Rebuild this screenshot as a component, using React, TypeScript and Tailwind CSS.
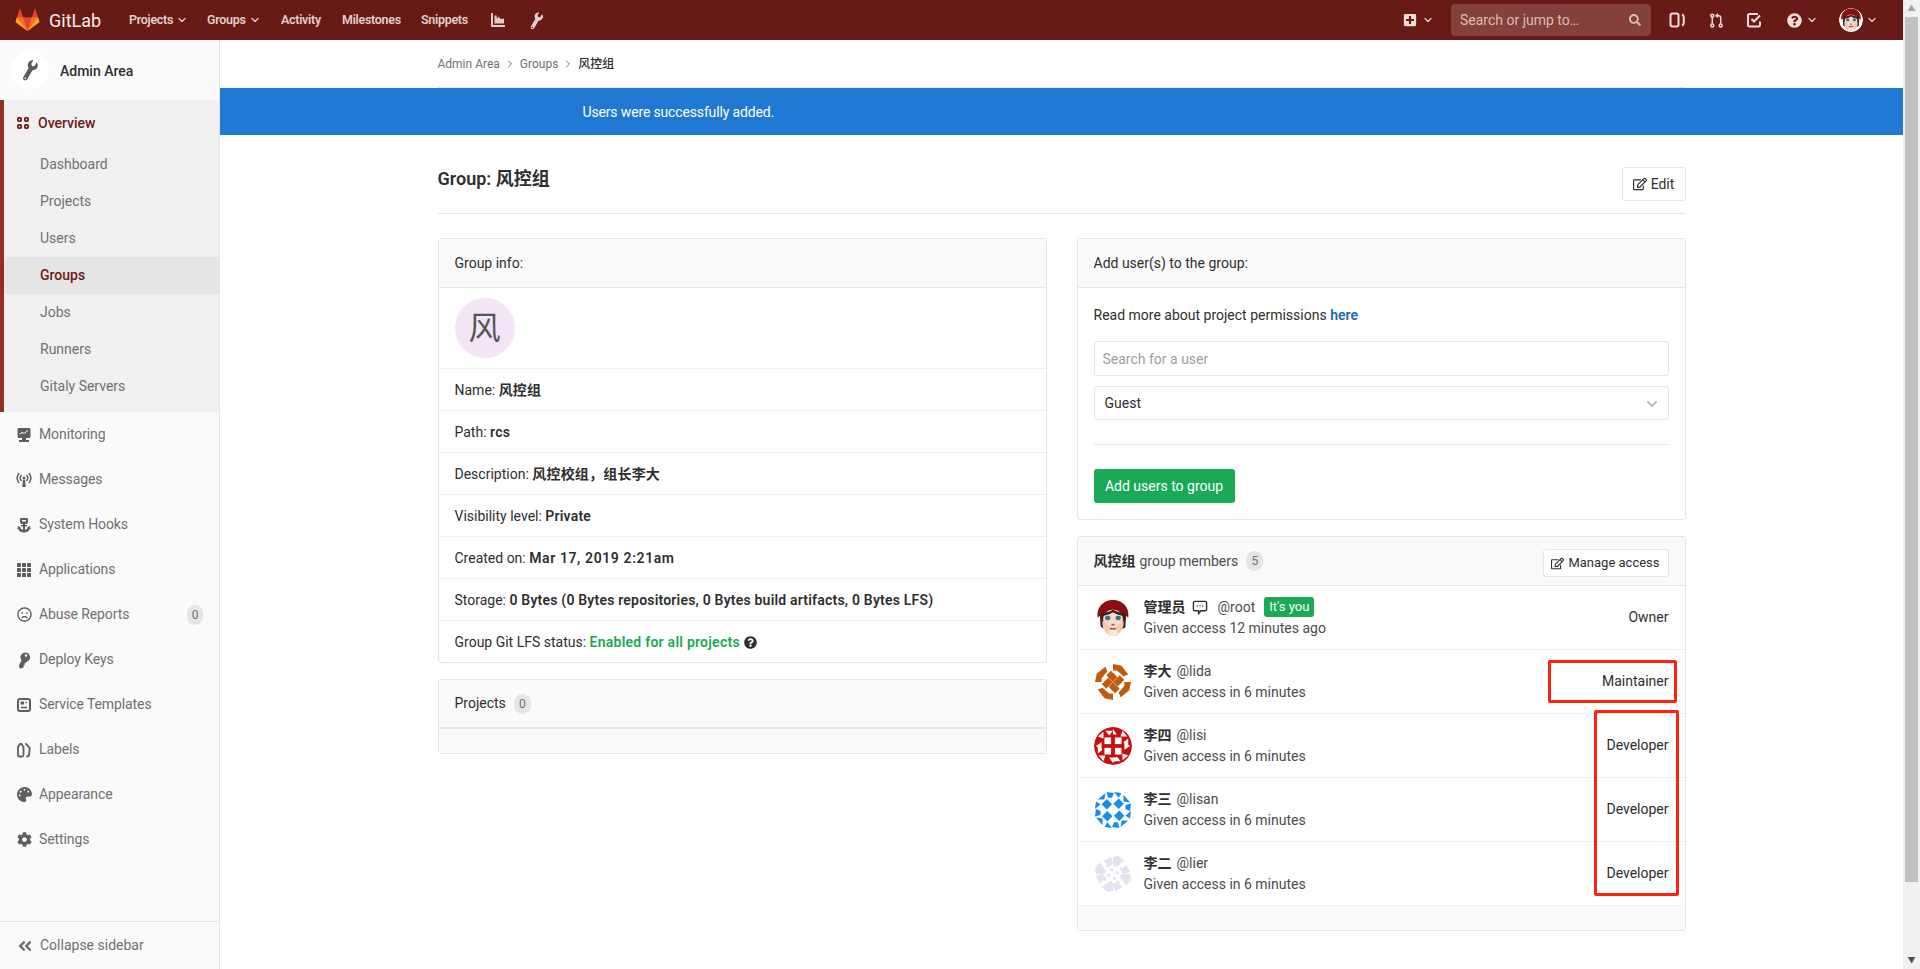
import type { ReactNode } from "react";
import { ChevronDown, ChevronRight } from "lucide-react";
import {
  FaAngleDoubleLeft,
  FaCog,
  FaKey,
  FaPalette,
  FaPlusSquare,
  FaQuestionCircle,
  FaRegEdit,
  FaRegFrown,
  FaSearch,
  FaWrench,
} from "react-icons/fa";

function Tanuki() {
  return (
    <svg viewBox="0 0 36 36" className="h-[24px] w-[25px] shrink-0">
      <path fill="#e24329" d="M2 14l9.38 9v-9l-4-12.28c-.205-.632-1.176-.632-1.38 0z" />
      <path fill="#e24329" d="M34 14l-9.38 9v-9l4-12.28c.205-.632 1.176-.632 1.38 0z" />
      <path fill="#e24329" d="M18,34.38 3,14 33,14 Z" />
      <path fill="#fc6d26" d="M18,34.38 11.38,14 2,14 6,25Z" />
      <path fill="#fc6d26" d="M18,34.38 24.62,14 34,14 30,25Z" />
      <path fill="#fca326" d="M2 14L.1 20.16c-.18.565 0 1.2.5 1.56l17.42 12.66z" />
      <path fill="#fca326" d="M34 14l1.9 6.16c.18.565 0 1.2-.5 1.56L18 34.38z" />
    </svg>
  );
}

function ChartIcon() {
  return (
    <svg viewBox="0 0 16 16" className="h-[16px] w-[16px]" fill="currentColor">
      <path d="M1 1h2v12h12v2H2a1 1 0 0 1-1-1z" />
      <path d="M4.5 11.5V3.5h2.2v3l2-1.8 2 2.3 3.3-.6v5.1z" />
    </svg>
  );
}

function BoardIcon() {
  return (
    <svg viewBox="0 0 16 16" className="h-[16px] w-[16px]" fill="none" stroke="currentColor" strokeWidth="2">
      <rect x="1.5" y="1.5" width="8" height="13" rx="2" />
      <path d="M13 2.5c1.2.6 1.8 1.6 1.8 3v5c0 1.4-.6 2.4-1.8 3" />
    </svg>
  );
}

function MergeIcon() {
  return (
    <svg viewBox="0 0 16 16" className="h-[17px] w-[15px]" fill="none" stroke="currentColor" strokeWidth="1.6">
      <circle cx="3.5" cy="2.8" r="1.6" />
      <circle cx="3.5" cy="13.2" r="1.6" />
      <circle cx="12.5" cy="13.2" r="1.6" />
      <path d="M3.5 4.5v7M12.5 11.5V5c0-1.5-.8-2.2-2.2-2.2H8" />
      <path d="M9.6 .9 7.6 2.8l2 1.9" />
    </svg>
  );
}

function TodoIcon() {
  return (
    <svg viewBox="0 0 16 16" className="h-[16px] w-[16px]" fill="none" stroke="currentColor" strokeWidth="2">
      <path d="M14 9.5V13a1.5 1.5 0 0 1-1.5 1.5h-9A1.5 1.5 0 0 1 2 13V3.5A1.5 1.5 0 0 1 3.5 2H12" />
      <path d="M5.5 7 8 9.5 14 3.5" />
    </svg>
  );
}

function OverviewIcon() {
  return (
    <svg viewBox="0 0 12 12" className="h-[12px] w-[12px]" fill="none" stroke="#6b1a16" strokeWidth="1.8">
      <rect x=".9" y=".9" width="3.2" height="3.2" rx=".8" />
      <rect x="7.9" y=".9" width="3.2" height="3.2" rx=".8" />
      <rect x=".9" y="7.9" width="3.2" height="3.2" rx=".8" />
      <rect x="7.9" y="7.9" width="3.2" height="3.2" rx=".8" />
    </svg>
  );
}

function MonitorIcon() {
  return (
    <svg viewBox="0 0 16 16" className="h-[16px] w-[16px]" fill="currentColor">
      <path d="M3 1h10a1.5 1.5 0 0 1 1.5 1.5v7A1.5 1.5 0 0 1 13 11H3a1.5 1.5 0 0 1-1.5-1.5v-7A1.5 1.5 0 0 1 3 1z" />
      <path d="M6 11h4v2H6zM3 13h10v2H3z" />
      <path d="M3.5 7l2.5-1.5 2 1 4-3" fill="none" stroke="#fafafa" strokeWidth="1" />
    </svg>
  );
}

function AntennaIcon() {
  return (
    <svg viewBox="0 0 16 16" className="h-[16px] w-[16px]" fill="none" stroke="currentColor" strokeWidth="1.5" strokeLinecap="round">
      <circle cx="8" cy="6" r="1.5" fill="currentColor" stroke="none" />
      <path d="M7 8h2l.8 7H6.2z" fill="currentColor" stroke="none" />
      <path d="M5.2 3.5a4 4 0 0 0 0 5M10.8 3.5a4 4 0 0 1 0 5M2.8 1.5a7.5 7.5 0 0 0 0 9M13.2 1.5a7.5 7.5 0 0 1 0 9" />
    </svg>
  );
}

function HookIcon() {
  return (
    <svg viewBox="0 0 16 16" className="h-[16px] w-[16px]" fill="currentColor">
      <path d="M5 1h6a1 1 0 0 1 1 1v3a2 2 0 0 1-2 2H9v1h2v1.5H9v3.3c1.5-.3 2.5-1 3-2.3l-1-.3L13.5 9l1.5 3-1-.3c-.8 2.3-3 3.8-6 3.8s-5.2-1.5-6-3.8l-1 .3L2.5 9 5 10.2l-1 .3c.5 1.3 1.5 2 3 2.3V9.5H5V8h2V7H6a2 2 0 0 1-2-2V2a1 1 0 0 1 1-1zm1 2v1.5h4V3z" />
    </svg>
  );
}

function AppsIcon() {
  const cells = [1, 6, 11];
  return (
    <svg viewBox="0 0 16 16" className="h-[16px] w-[16px]" fill="currentColor">
      {cells.map((y) =>
        cells.map((x) => <rect key={x + "-" + y} x={x} y={y} width="4" height="4" rx=".5" />)
      )}
    </svg>
  );
}

function TemplateIcon() {
  return (
    <svg viewBox="0 0 16 16" className="h-[16px] w-[16px]" fill="none" stroke="currentColor" strokeWidth="2">
      <rect x="2" y="2" width="12" height="12" rx="2" />
      <rect x="5" y="5" width="2.5" height="2" fill="currentColor" strokeWidth="1" />
      <path d="M9.5 5.5H11M5 10.5h6" strokeWidth="1.5" />
    </svg>
  );
}

function LabelsIcon() {
  return (
    <svg viewBox="0 0 16 16" className="h-[16px] w-[16px]" fill="none" stroke="currentColor" strokeWidth="1.8">
      <path d="M2 5l2-3h1.5l2 3v8a1.5 1.5 0 0 1-1.5 1.5H3.5A1.5 1.5 0 0 1 2 13z" />
      <path d="M10 1.8l3 3.2c1 1 1 2 .6 3l-.6 5c-.2 1-.8 1.5-2 1.5" strokeLinecap="round" />
    </svg>
  );
}

function ChatIcon() {
  return (
    <svg viewBox="0 0 16 16" className="h-[15px] w-[16px]" fill="none" stroke="#2e2e2e" strokeWidth="1.5">
      <path d="M2.5 1.5h11A1.5 1.5 0 0 1 15 3v7a1.5 1.5 0 0 1-1.5 1.5H9l-2.5 3v-3h-4A1.5 1.5 0 0 1 1 10V3a1.5 1.5 0 0 1 1.5-1.5z" />
      <path d="M4.5 6.5h1M7.5 6.5h1M10.5 6.5h1" strokeWidth="1.6" />
    </svg>
  );
}

function RootAvatar({ className }: { className: string }) {
  return (
    <svg viewBox="0 0 40 40" className={className}>
      <circle cx="20" cy="20" r="20" fill="#ffffff" />
      <path d="M6 15c0-5 6-9 14-9s14 4 14 9l-1 15-5 2H12l-5-3z" fill="#3d211b" />
      <path d="M4 20C2 9 10 1 20 1s18 8 16 19c-3-5-9-8-16-8S7 15 4 20z" fill="#8b0f12" />
      <ellipse cx="20" cy="21" rx="10.5" ry="10" fill="#f8d8c8" />
      <path d="M10 14c4 0 8-1 10-3 3 2 6 3 10 3l1 4c-5-1-8-2-11-4-3 2-6 3-11 4z" fill="#3d211b" />
      <ellipse cx="14.5" cy="20" rx="2.8" ry="2.3" fill="#35757f" />
      <ellipse cx="25.5" cy="20" rx="2.8" ry="2.3" fill="#35757f" />
      <ellipse cx="20" cy="27" rx="1.8" ry="1" fill="#c9434a" />
      <path d="M9 23c3 1 7 6 9 10l-2 5c-4-2-8-8-7-15zM31 23c-3 1-7 6-9 10l2 5c4-2 8-8 7-15z" fill="#f6c8ae" />
      <path d="M16 32c1 1 2 2 4 2s3-1 4-2l1 7h-10z" fill="#fbe4d8" />
    </svg>
  );
}

function Identicon({ color, kind }: { color: string; kind: "lida" | "lisi" | "lisan" | "lier" }) {
  const quarter: Record<string, ReactNode> = {
    lida: (
      <>
        <path d="M20 1l9 2 7 9-5 2-7-6h-4z" />
        <path d="M20 10l4.500 5-4.500 5-4.500-5z" />
        <path d="M27 13l5 5-3 2h-5l-1-3z" />
      </>
    ),
    lisi: (
      <>
        <path d="M20 20V0a20 20 0 0 1 20 20z" />
        <rect x="22" y="11" width="7" height="7" fill="#ffffff" />
        <path d="M20 2l4 6h-8zM30 4l5 6h-7zM36 12v8l-5-4z" fill="#ffffff" />
      </>
    ),
    lisan: (
      <>
        <path d="M26 8l5.500 5.500L26 19l-5.500-5.500z" />
        <path d="M21 1l8 1-3 5zM31 4l7 8-7-1zM33 15l6-2-1 8-5-2z" />
      </>
    ),
    lier: (
      <>
        <path d="M20 2l6-1 6 5-9 7-3-2z" />
        <path d="M34 10l4 8-7 2-3-4z" />
        <path d="M23 17h3v3h-3zM27 13h3v3h-3z" />
      </>
    ),
  };
  return (
    <svg viewBox="0 0 40 40" className="h-[38px] w-[38px] shrink-0 rounded-full">
      <circle cx="20" cy="20" r="20" fill="#ffffff" />
      <g fill={color}>
        {[0, 90, 180, 270].map((a) => (
          <g key={a} transform={"rotate(" + a + " 20 20)"}>
            {quarter[kind]}
          </g>
        ))}
      </g>
    </svg>
  );
}

const subItems = ["Dashboard", "Projects", "Users", "Groups", "Jobs", "Runners", "Gitaly Servers"];

const sideItems: { label: string; icon: ReactNode; badge?: string }[] = [
  { label: "Monitoring", icon: <MonitorIcon /> },
  { label: "Messages", icon: <AntennaIcon /> },
  { label: "System Hooks", icon: <HookIcon /> },
  { label: "Applications", icon: <AppsIcon /> },
  { label: "Abuse Reports", icon: <FaRegFrown className="h-[15px] w-[15px]" />, badge: "0" },
  { label: "Deploy Keys", icon: <FaKey className="h-[14px] w-[14px] rotate-[-20deg]" /> },
  { label: "Service Templates", icon: <TemplateIcon /> },
  { label: "Labels", icon: <LabelsIcon /> },
  { label: "Appearance", icon: <FaPalette className="h-[15px] w-[15px]" /> },
  { label: "Settings", icon: <FaCog className="h-[15px] w-[15px]" /> },
];

function TopNav() {
  return (
    <header className="flex h-[40px] items-center bg-[#681a17] text-[12.5px] font-semibold tracking-[-0.3px] text-[#e0cfcd]">
      <div className="ml-[15px] flex w-[114px] items-center">
        <Tanuki />
        <span className="ml-[9px] text-[18px] font-normal tracking-normal text-[#f7ecea]">GitLab</span>
      </div>
      <nav className="flex items-center">
        <span className="flex w-[78px] items-center">
          Projects <ChevronDown className="ml-[3px] h-[12px] w-[12px]" strokeWidth={2.5} />
        </span>
        <span className="flex w-[74px] items-center">
          Groups <ChevronDown className="ml-[3px] h-[12px] w-[12px]" strokeWidth={2.5} />
        </span>
        <span className="w-[61px]">Activity</span>
        <span className="w-[79px]">Milestones</span>
        <span className="w-[69px]">Snippets</span>
        <span className="w-[39px]">
          <ChartIcon />
        </span>
        <FaWrench className="h-[15px] w-[15px] rotate-[-15deg]" />
      </nav>
      <div className="ml-auto flex items-center">
        <FaPlusSquare className="h-[14px] w-[14px] text-[#f0dcda]" />
        <ChevronDown className="ml-[5px] h-[12px] w-[12px]" strokeWidth={2.5} />
        <div className="ml-[17px] flex h-[32px] w-[200px] items-center justify-between rounded-[4px] bg-[#84403b] pl-[9px] pr-[10px] text-[14px] font-normal tracking-normal text-[#d9bdb9]">
          Search or jump to…
          <FaSearch className="h-[12px] w-[12px]" />
        </div>
        <span className="ml-[18px] text-[#f0dcda]">
          <BoardIcon />
        </span>
        <span className="ml-[24px] text-[#f0dcda]">
          <MergeIcon />
        </span>
        <span className="ml-[22px] text-[#f0dcda]">
          <TodoIcon />
        </span>
        <FaQuestionCircle className="ml-[25px] h-[15px] w-[15px] text-[#f0dcda]" />
        <ChevronDown className="ml-[4px] h-[12px] w-[12px]" strokeWidth={2.5} />
        <RootAvatar className="ml-[21px] h-[24px] w-[24px] rounded-full" />
        <ChevronDown className="ml-[3px] mr-[25px] h-[12px] w-[12px]" strokeWidth={2.5} />
      </div>
    </header>
  );
}

function Sidebar() {
  return (
    <aside className="flex h-[929px] w-[220px] shrink-0 flex-col border-r border-[#e5e5e5] bg-[#fafafa] text-[14px] text-[#707070]">
      <div className="flex h-[60px] items-center pl-[11px]">
        <div className="flex h-[38px] w-[38px] items-center justify-center rounded-full bg-white">
          <FaWrench className="h-[18px] w-[18px] rotate-[-15deg] text-[#5c5c5c]" />
        </div>
        <span className="ml-[11px] mt-[2px] font-medium text-[#2e2e2e]">Admin Area</span>
      </div>
      <div className="border-l-4 border-[#962e20] bg-[#f0f0f0] pb-[7px]">
        <div className="flex h-[46px] items-center pl-[13px] font-medium text-[#6b1a16]">
          <OverviewIcon />
          <span className="ml-[9px]">Overview</span>
        </div>
        {subItems.map((item) => (
          <div
            key={item}
            className={
              item === "Groups"
                ? "flex h-[37px] items-center bg-[#e5e5e5] pl-[36px] font-medium text-[#6b1a16]"
                : "flex h-[37px] items-center pl-[36px]"
            }
          >
            {item}
          </div>
        ))}
      </div>
      <div>
        {sideItems.map((item) => (
          <div key={item.label} className="flex h-[45px] items-center pl-[16px] pr-[16px]">
            <span className="flex w-[16px] justify-center text-[#5e5e5e]">{item.icon}</span>
            <span className="ml-[7px] tracking-[-0.1px]">{item.label}</span>
            {item.badge && (
              <span className="ml-auto flex h-[20px] w-[16px] items-center justify-center rounded-full bg-[#e5e5e5] text-[12px]">
                {item.badge}
              </span>
            )}
          </div>
        ))}
      </div>
      <div className="mt-auto flex h-[48px] items-center border-t border-[#e5e5e5] pl-[17px]">
        <FaAngleDoubleLeft className="h-[16px] w-[16px]" />
        <span className="ml-[7px]">Collapse sidebar</span>
      </div>
    </aside>
  );
}

function Panel({ children }: { children: ReactNode }) {
  return <div className="rounded-[3px] border border-[#e5e5e5] bg-white">{children}</div>;
}

function PanelHead({ children }: { children: ReactNode }) {
  return (
    <div className="flex h-[49px] items-center border-b border-[#e5e5e5] bg-[#fafafa] px-[16px] text-[#2e2e2e]">
      {children}
    </div>
  );
}

function InfoRow({ children }: { children: ReactNode }) {
  return (
    <div className="flex h-[42px] items-center whitespace-pre border-b border-[#f0f0f0] px-[16px] pt-[2px] last:h-[41px] last:border-b-0">
      {children}
    </div>
  );
}

function Count({ n }: { n: number }) {
  return (
    <span className="ml-[8px] flex h-[20px] w-[17px] items-center justify-center rounded-full bg-[#e5e5e5] text-[12px] text-[#707070]">
      {n}
    </span>
  );
}

function Member(props: { name: string; handle: string; access: string; role: string; avatar: ReactNode; you?: boolean }) {
  return (
    <div className="flex h-[64px] items-center border-b border-[#f0f0f0] pl-[16px] pr-[16px] last:border-[#e5e5e5]">
      {props.avatar}
      <div className="ml-[12px] leading-[21px]">
        <div className="flex items-center">
          <span className="font-semibold">{props.name}</span>
          {props.you && (
            <span className="ml-[6px]">
              <ChatIcon />
            </span>
          )}
          <span className={props.you ? "ml-[10px] text-[#4c4c4c]" : "ml-[5px] text-[#4c4c4c]"}>{props.handle}</span>
          {props.you && (
            <span className="ml-[9px] rounded-[3px] bg-[#1aaa55] px-[5px] text-[13px] leading-[20px] text-white">
              It's you
            </span>
          )}
        </div>
        <div className="text-[#4c4c4c]">{props.access}</div>
      </div>
      <span className="ml-auto">{props.role}</span>
    </div>
  );
}

function Strong({ children }: { children: ReactNode }) {
  return <b className="font-semibold tracking-[0.2px]">{children}</b>;
}

export default function App() {
  return (
    <div className="flex h-[969px] w-[1920px] overflow-hidden bg-white font-[family-name:Roboto,'Noto_Sans_CJK_SC',sans-serif] text-[14px] text-[#2e2e2e]">
      <div className="w-[1903px] shrink-0">
        <TopNav />
        <div className="flex">
          <Sidebar />
          <main className="min-w-0 flex-1">
            <div className="mx-auto w-[1280px] px-[16px]">
              <div className="flex h-[48px] items-center border-b border-[#e5e5e5] text-[12px] text-[#707070]">
                Admin Area
                <ChevronRight className="mx-[4px] h-[12px] w-[12px]" />
                Groups
                <ChevronRight className="mx-[4px] h-[12px] w-[12px]" />
                <span className="font-medium text-[#2e2e2e]">风控组</span>
              </div>
            </div>
            <div className="h-[47px] bg-[#1f78d1] text-white">
              <div className="mx-auto flex h-full w-[1280px] items-center pl-[161px] pt-[2px] tracking-[-0.15px]">
                Users were successfully added.
              </div>
            </div>
            <div className="mx-auto w-[1280px] px-[16px]">
              <div className="flex items-start justify-between border-b border-[#e5e5e5] pb-[12px] pt-[32px]">
                <h3 className="mt-[1px] text-[18px] font-semibold leading-[22px]">Group: 风控组</h3>
                <button className="flex h-[34px] w-[64px] items-center justify-center rounded-[3px] border border-[#e5e5e5] bg-white">
                  <FaRegEdit className="mr-[4px] h-[14px] w-[14px]" />
                  Edit
                </button>
              </div>
              <div className="mt-[24px] grid grid-cols-2 gap-[30px]">
                <div>
                  <Panel>
                    <PanelHead>Group info:</PanelHead>
                    <div className="h-[81px] border-b border-[#f0f0f0] px-[16px] pt-[10px]">
                      <div className="flex h-[60px] w-[60px] items-center justify-center rounded-full bg-[#f3e5f5] text-[32px] text-[#555555]">
                        风
                      </div>
                    </div>
                    <InfoRow>
                      Name: <Strong>风控组</Strong>
                    </InfoRow>
                    <InfoRow>
                      Path: <Strong>rcs</Strong>
                    </InfoRow>
                    <InfoRow>
                      Description: <Strong>风控校组，组长李大</Strong>
                    </InfoRow>
                    <InfoRow>
                      Visibility level: <Strong>Private</Strong>
                    </InfoRow>
                    <InfoRow>
                      Created on: <b className="font-semibold tracking-[0.6px]">Mar 17, 2019 2:21am</b>
                    </InfoRow>
                    <InfoRow>
                      Storage: <Strong>0 Bytes (0 Bytes repositories, 0 Bytes build artifacts, 0 Bytes LFS)</Strong>
                    </InfoRow>
                    <InfoRow>
                      Group Git LFS status: <b className="font-semibold tracking-[0.25px] text-[#1aaa55]">Enabled for all projects</b>
                      <FaQuestionCircle className="ml-[4px] h-[13px] w-[13px]" />
                    </InfoRow>
                  </Panel>
                  <div className="mt-[16px]">
                    <Panel>
                      <div className="flex h-[49px] items-center border-b-2 border-[#e5e5e5] bg-[#fafafa] px-[16px]">
                        Projects
                        <Count n={0} />
                      </div>
                      <div className="h-[24px] bg-[#fafafa]" />
                    </Panel>
                  </div>
                </div>
                <div>
                  <Panel>
                    <PanelHead>Add user(s) to the group:</PanelHead>
                    <div className="px-[16px] pb-[16px] pt-[17px]">
                      <p className="leading-[20px]">
                        Read more about project permissions <b className="font-semibold text-[#1b69b6]">here</b>
                      </p>
                      <div className="mt-[16px] flex h-[35px] items-center rounded-[3px] border border-[#e5e5e5] px-[8px] pt-[2px] text-[#a0a0a0]">
                        Search for a user
                      </div>
                      <div className="mt-[10px] flex h-[34px] items-center justify-between rounded-[3px] border border-[#e5e5e5] pl-[10px] pr-[8px]">
                        Guest
                        <ChevronDown className="mt-[2px] h-[16px] w-[16px] text-[#c0c0c0]" strokeWidth={3.5} />
                      </div>
                      <div className="mt-[24px] h-px bg-[#e5e5e5]" />
                      <button className="mt-[24px] h-[34px] w-[141px] rounded-[3px] bg-[#1aaa55] text-white">
                        Add users to group
                      </button>
                    </div>
                  </Panel>
                  <div className="relative mt-[16px]">
                    <Panel>
                      <div className="flex h-[49px] items-center border-b border-[#e5e5e5] bg-[#fafafa] pl-[16px] pr-[16px]">
                        <span className="font-semibold">风控组</span>
                        <span className="ml-[4px] text-[#4c4c4c]">group members</span>
                        <Count n={5} />
                        <button className="ml-auto mt-[4px] flex h-[28px] w-[126px] items-center justify-center rounded-[3px] border border-[#e5e5e5] bg-white text-[13px]">
                          <FaRegEdit className="mr-[4px] h-[13px] w-[13px]" />
                          Manage access
                        </button>
                      </div>
                      <Member
                        name="管理员"
                        handle="@root"
                        you
                        access="Given access 12 minutes ago"
                        role="Owner"
                        avatar={<RootAvatar className="h-[38px] w-[38px] shrink-0 rounded-full" />}
                      />
                      <Member name="李大" handle="@lida" access="Given access in 6 minutes" role="Maintainer" avatar={<Identicon color="#c05a10" kind="lida" />} />
                      <Member name="李四" handle="@lisi" access="Given access in 6 minutes" role="Developer" avatar={<Identicon color="#c90e0e" kind="lisi" />} />
                      <Member name="李三" handle="@lisan" access="Given access in 6 minutes" role="Developer" avatar={<Identicon color="#1a8cf0" kind="lisan" />} />
                      <Member name="李二" handle="@lier" access="Given access in 6 minutes" role="Developer" avatar={<Identicon color="#e6e1ee" kind="lier" />} />
                      <div className="h-[24px] bg-[#fafafa]" />
                    </Panel>
                    <div className="absolute left-[471px] top-[124px] h-[43px] w-[129px] rounded-[2px] border-[3px] border-[#ff2010]" />
                    <div className="absolute left-[517px] top-[174px] h-[186px] w-[85px] rounded-[2px] border-[3px] border-[#ff2010]" />
                  </div>
                </div>
              </div>
            </div>
          </main>
        </div>
      </div>
      <div className="flex h-full w-[17px] shrink-0 flex-col items-center bg-[#f1f1f1]">
        <div className="flex h-[17px] items-center text-[8px] leading-none text-[#a3a3a3]">▲</div>
        <div className="h-[865px] w-[13px] bg-[#c1c1c1]" />
        <div className="mt-auto flex h-[17px] items-center text-[8px] leading-none text-[#505050]">▼</div>
      </div>
    </div>
  );
}
